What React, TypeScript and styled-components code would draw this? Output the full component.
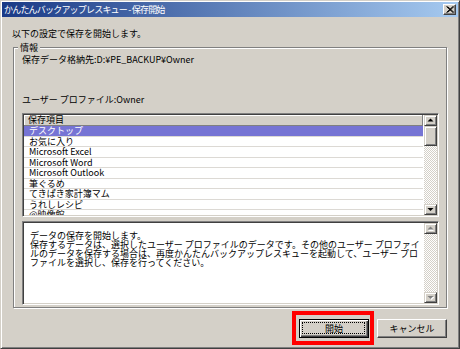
import React from 'react';
import styled, { createGlobalStyle } from 'styled-components';

const Global = createGlobalStyle`
  html, body { margin: 0; padding: 0; background: #d4d0c8; }
  body {
    font-family: "Noto Sans CJK JP", "Liberation Sans", sans-serif;
    font-size: 9px;
    color: #000;
  }
`;

const Window = styled.div`
  box-sizing: border-box;
  width: 460px;
  height: 349px;
  background: #d4d0c8;
  border-style: solid;
  border-width: 1px;
  border-color: #d4d0c8 #404040 #404040 #d4d0c8;
  box-shadow: inset 1px 1px 0 #fff, inset -1px -1px 0 #808080;
  padding: 1px;
  display: flex;
  flex-direction: column;
  overflow: hidden;
`;

const TitleBar = styled.div`
  height: 15px;
  flex: none;
  background: linear-gradient(90deg, #1a3a86, #a6caf0);
  color: #fff;
  display: flex;
  align-items: center;
  justify-content: space-between;
  padding: 0 2px 0 2px;
`;

const TitleText = styled.span`
  font-size: 9px;
  line-height: 15px;
  letter-spacing: -0.8px;
  white-space: nowrap;
`;

const CloseBtn = styled.div`
  box-sizing: border-box;
  width: 13px;
  height: 11px;
  background: #d4d0c8;
  border: 1px solid;
  border-color: #fff #404040 #404040 #fff;
  box-shadow: inset -1px -1px 0 #808080;
  display: flex;
  align-items: center;
  justify-content: center;
`;

const Body = styled.div`
  flex: 1;
  display: flex;
  flex-direction: column;
  padding: 0 11px;
`;

const Intro = styled.div`
  margin: 11px 0 0 -1px;
  line-height: 11px;
  white-space: nowrap;
`;

const Group = styled.fieldset`
  margin: 3px 0 0;
  padding: 1px 7px 2px 8px;
  min-width: 0;
  border: 1px solid #808080;
  box-shadow: inset 1px 1px 0 #fff, 1px 1px 0 #fff;
  display: flex;
  flex-direction: column;
`;

const Legend = styled.legend`
  padding: 0 2px;
  margin-left: -4px;
  line-height: 11px;
  background: #d4d0c8;
`;

const InfoLine = styled.div<{ $gap?: number }>`
  line-height: 11px;
  white-space: nowrap;
  margin-top: ${(p) => p.$gap ?? 0}px;
`;

const Sunken = styled.div<{ $h: number; $gap: number }>`
  box-sizing: border-box;
  height: ${(p) => p.$h}px;
  margin-top: ${(p) => p.$gap}px;
  display: flex;
  border: 1px solid;
  border-color: #808080 #fff #fff #808080;
  box-shadow: inset 1px 1px 0 #404040, inset -1px -1px 0 #d4d0c8;
  padding: 1px;
  background: #fff;
`;

const ListBody = styled.div`
  flex: 1;
  min-width: 0;
  overflow: hidden;
  display: flex;
  flex-direction: column;
  margin-right: 1px;
`;

const ListHeader = styled.div`
  box-sizing: border-box;
  height: 11px;
  flex: none;
  background: #d4d0c8;
  border-right: 1px solid #808080;
  border-bottom: 1px solid #808080;
  box-shadow: inset 1px 1px 0 #fff;
  padding-left: 4px;
  line-height: 10px;
  white-space: nowrap;
`;

const Row = styled.div<{ $selected?: boolean }>`
  box-sizing: border-box;
  height: 10.5px;
  flex: none;
  border-bottom: 1px solid #dcd9d4;
  padding-left: 5px;
  line-height: 9.5px;
  white-space: nowrap;
  background: ${(p) => (p.$selected ? '#7674d4' : '#fff')};
  color: ${(p) => (p.$selected ? '#fff' : '#000')};
`;

const ScrollBar = styled.div`
  width: 13px;
  flex: none;
  display: flex;
  flex-direction: column;
  background: repeating-conic-gradient(#d4d0c8 0 25%, #fff 0 50%) 0 0 / 2px 2px;
`;

const SbButton = styled.div<{ $h?: number }>`
  box-sizing: border-box;
  width: 13px;
  height: ${(p) => p.$h ?? 11}px;
  flex: none;
  background: #d4d0c8;
  border: 1px solid;
  border-color: #d4d0c8 #404040 #404040 #d4d0c8;
  box-shadow: inset 1px 1px 0 #fff, inset -1px -1px 0 #808080;
  display: flex;
  align-items: center;
  justify-content: center;
`;

const Track = styled.div`
  flex: 1;
`;

const TextArea = styled.div`
  flex: 1;
  min-width: 0;
  overflow: hidden;
  padding: 8px 0 0 6px;
  margin-right: 1px;
`;

const TextLine = styled.div`
  line-height: 9px;
  white-space: nowrap;
`;

const ButtonRow = styled.div`
  display: flex;
  justify-content: flex-end;
  gap: 8px;
  margin-top: 11px;
`;

const Button = styled.div<{ $default?: boolean; $marked?: boolean }>`
  position: relative;
  box-sizing: border-box;
  width: 70px;
  height: 19px;
  background: #d4d0c8;
  display: flex;
  align-items: center;
  justify-content: center;
  line-height: 9px;
  border: 1px solid;
  border-color: ${(p) => (p.$default ? '#000' : '#fff #404040 #404040 #fff')};
  box-shadow: ${(p) =>
    p.$default
      ? 'inset 1px 1px 0 #fff, inset -1px -1px 0 #404040, inset -2px -2px 0 #808080'
      : 'inset -1px -1px 0 #808080'};

  &::before {
    content: '';
    display: ${(p) => (p.$default ? 'block' : 'none')};
    position: absolute;
    inset: 2px 3px 3px 2px;
    border: 1px dotted #000;
  }

  &::after {
    content: '';
    display: ${(p) => (p.$marked ? 'block' : 'none')};
    position: absolute;
    top: -9px;
    left: -8px;
    right: -6px;
    bottom: -8px;
    border: 4px solid #ff0000;
  }
`;

const UpArrow = ({ disabled }: { disabled?: boolean }) => (
  <svg width="7" height="5" viewBox="0 0 7 5">
    {disabled && <polygon points="4,2 7,5 1,5" fill="#fff" />}
    <polygon points="3.5,0.5 6.5,3.5 0.5,3.5" fill={disabled ? '#808080' : '#000'} />
  </svg>
);

const DownArrow = ({ disabled }: { disabled?: boolean }) => (
  <svg width="7" height="5" viewBox="0 0 7 5">
    {disabled && <polygon points="1.5,2 7.5,2 4.5,5" fill="#fff" />}
    <polygon points="0.5,1 6.5,1 3.5,4" fill={disabled ? '#808080' : '#000'} />
  </svg>
);

const CloseIcon = () => (
  <svg width="8" height="7" viewBox="0 0 8 7">
    <path d="M0.5 0.5 L7 6.5 M1.5 0.5 L8 6.5 M7 0.5 L0.5 6.5 M8 0.5 L1.5 6.5" stroke="#000" strokeWidth="1" />
  </svg>
);

const items = [
  'デスクトップ',
  'お気に入り',
  'Microsoft Excel',
  'Microsoft Word',
  'Microsoft Outlook',
  '筆ぐるめ',
  'てきぱき家計簿マム',
  'うれしレシピ',
  '@映像館',
];

const message = [
  'データの保存を開始します。',
  '保存するデータは、選択したユーザー プロファイルのデータです。その他のユーザー プロファイ',
  'ルのデータを保存する場合は、再度かんたんバックアップレスキューを起動して、ユーザー プロ',
  'ファイルを選択し、保存を行ってください。',
];

export default function App() {
  return (
    <>
      <Global />
      <Window>
        <TitleBar>
          <TitleText>かんたんバックアップレスキュー - 保存開始</TitleText>
          <CloseBtn>
            <CloseIcon />
          </CloseBtn>
        </TitleBar>
        <Body>
          <Intro>以下の設定で保存を開始します。</Intro>
          <Group>
            <Legend>情報</Legend>
            <InfoLine>保存データ格納先:D:¥PE_BACKUP¥Owner</InfoLine>
            <InfoLine $gap={29}>ユーザー プロファイル:Owner</InfoLine>
            <Sunken $h={104} $gap={8}>
              <ListBody>
                <ListHeader>保存項目</ListHeader>
                {items.map((it, i) => (
                  <Row key={it} $selected={i === 0}>
                    {it}
                  </Row>
                ))}
              </ListBody>
              <ScrollBar>
                <SbButton>
                  <UpArrow />
                </SbButton>
                <SbButton $h={20} />
                <Track />
                <SbButton>
                  <DownArrow />
                </SbButton>
              </ScrollBar>
            </Sunken>
            <Sunken $h={84} $gap={4}>
              <TextArea>
                {message.map((m) => (
                  <TextLine key={m}>{m}</TextLine>
                ))}
              </TextArea>
              <ScrollBar>
                <SbButton>
                  <UpArrow disabled />
                </SbButton>
                <Track />
                <SbButton>
                  <DownArrow disabled />
                </SbButton>
              </ScrollBar>
            </Sunken>
          </Group>
          <ButtonRow>
            <Button $default $marked>
              開始
            </Button>
            <Button>キャンセル</Button>
          </ButtonRow>
        </Body>
      </Window>
    </>
  );
}
